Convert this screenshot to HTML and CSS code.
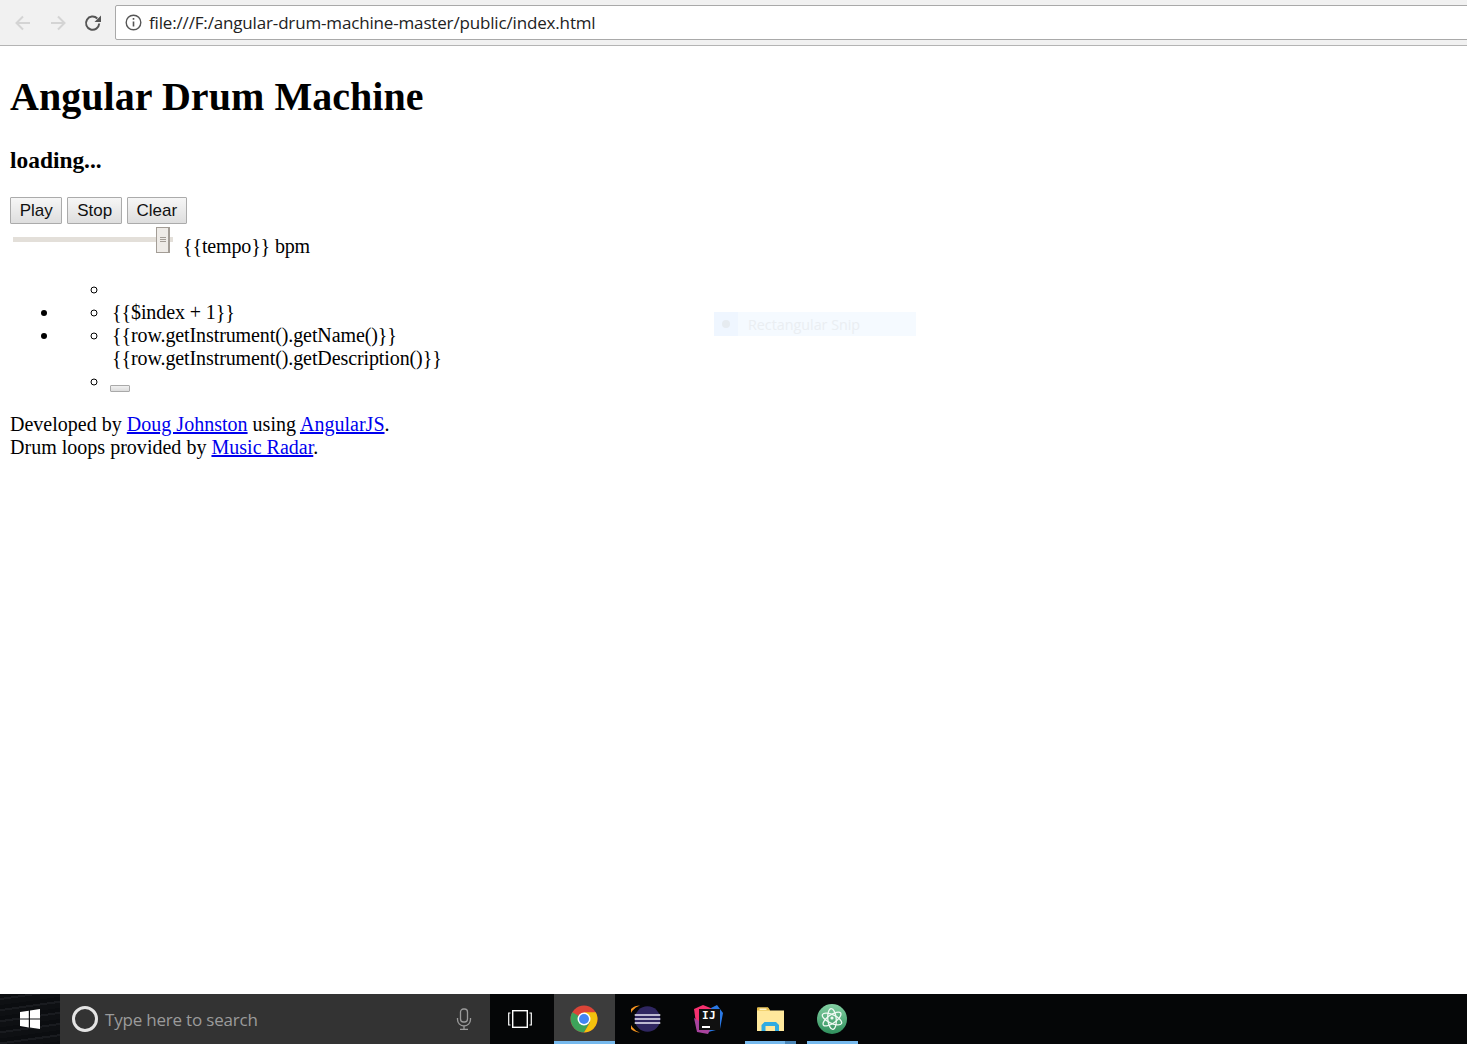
FILE: index.html
```html
<!DOCTYPE html>
<html lang="en">
<head>
<meta charset="utf-8">
<title>Angular Drum Machine</title>
<link rel="stylesheet" href="styles.css">
</head>
<body>
<header class="toolbar">
  <svg class="nav-icon" width="20" height="20" viewBox="0 0 20 20"><path d="M17 10H4M10 3.500L3.500 10l6.500 6.500" fill="none" stroke="#d4d4d4" stroke-width="2"/></svg>
  <svg class="nav-icon" width="20" height="20" viewBox="0 0 20 20"><path d="M3 10h13M10 3.500l6.500 6.500-6.500 6.500" fill="none" stroke="#d4d4d4" stroke-width="2"/></svg>
  <svg class="nav-icon" width="20" height="20" viewBox="0 0 20 20"><path d="M16.200 10.500a6.600 6.600 0 1 1-1.900-5" fill="none" stroke="#555" stroke-width="2"/><path d="M18 2.500v6.500h-6.500z" fill="#555"/></svg>
  <div class="address">
    <svg width="17" height="17" viewBox="0 0 17 17"><circle cx="8.500" cy="8.500" r="7.300" fill="none" stroke="#555" stroke-width="1.400"/><path d="M8.500 7.500v5M8.500 4v1.800" stroke="#555" stroke-width="1.600"/></svg>
    <span class="url">file:///F:/angular-drum-machine-master/public/index.html</span>
  </div>
</header>

<main class="page">
  <h1>Angular Drum Machine</h1>
  <h3>loading...</h3>
  <div class="controls">
    <button class="btn">Play</button>
    <button class="btn">Stop</button>
    <button class="btn">Clear</button>
  </div>
  <div class="tempo">
    <div class="slider"><div class="thumb"><i></i><i></i><i></i></div></div>
    <span>{{tempo}} bpm</span>
  </div>
  <ul class="outer">
    <ul class="inner"><li></li></ul>
    <li><ul class="inner"><li>{{$index + 1}}</li></ul></li>
    <li>
      <ul class="inner">
        <li>{{row.getInstrument().getName()}}<br>{{row.getInstrument().getDescription()}}</li>
        <li><button class="pad"></button></li>
      </ul>
    </li>
  </ul>
  <footer class="credits">
    Developed by <a href="#">Doug Johnston</a> using <a href="#">AngularJS</a>.<br>
    Drum loops provided by <a href="#">Music Radar</a>.
  </footer>
  <div class="snip"><span class="snip-icon"><b></b></span><span class="snip-label">Rectangular Snip</span></div>
</main>

<div class="taskbar">
  <div class="start">
    <svg width="20" height="20" viewBox="0 0 20 20"><path fill="#fff" d="M0 3l8.800-1.300v7.800H0zM10 1.500L20 0v9.500H10zM0 10.600h8.800v7.800L0 17.100zM10 10.600h10V20l-10-1.500z"/></svg>
  </div>
  <div class="search">
    <svg width="28" height="28" viewBox="0 0 28 28"><circle cx="14" cy="14" r="11.500" fill="none" stroke="#e4e4e4" stroke-width="3"/></svg>
    <span class="search-text">Type here to search</span>
    <svg class="mic" width="16" height="22" viewBox="0 0 16 22"><rect x="4.500" y="1" width="7" height="13" rx="3" fill="none" stroke="#9a9a9a" stroke-width="1.300"/><path d="M1.500 10v1.500a6.500 6.500 0 0 0 13 0V10M8 18v3M4 21.300h8" fill="none" stroke="#9a9a9a" stroke-width="1.300"/></svg>
  </div>
  <div class="task-slot view">
    <svg width="24" height="18" viewBox="0 0 24 18"><rect x="4.700" y=".7" width="14.600" height="16.600" fill="none" stroke="#fff" stroke-width="1.400"/><path d="M2.500 3H.7v12h1.800M21.500 3h1.800v12h-1.800" fill="none" stroke="#fff" stroke-width="1.200"/></svg>
  </div>
  <div class="task-slot chrome">
    <svg width="28" height="28" viewBox="0 0 28 28"><circle cx="14" cy="14" r="13.500" fill="#db4437"/><path d="M14 14L2.300 7.300A13.500 13.500 0 0 0 14 27.500l6.700-11.700z" fill="#3da35a"/><path d="M14 7.300h11.700A13.500 13.500 0 0 1 14 27.500l6-10z" fill="#f4c20d"/><circle cx="14" cy="14" r="6.500" fill="#fff"/><circle cx="14" cy="14" r="5" fill="#4285f4"/></svg>
  </div>
  <div class="task-slot eclipse">
    <svg width="30" height="28" viewBox="0 0 30 28"><path d="M9 .5a13.500 13.500 0 0 0 0 27a14 14 0 0 1 0-27z" fill="#f7941e"/><circle cx="16.500" cy="14" r="12.800" fill="#2f2660"/><path d="M3.700 10h25.600M3.700 14h25.600M3.700 18h25.600" stroke="#ece9f5" stroke-width="1.700"/></svg>
  </div>
  <div class="task-slot idea">
    <div class="idea-art">
      <svg width="30" height="31" viewBox="0 0 30 31"><path d="M1 5l9-4 10 4-16 21z" fill="#f5316f"/><path d="M18 4l6-3 6 8-3 16-12 3z" fill="#2a78e4"/><path d="M1 14l3 14 11 2 3-6z" fill="#a8439d"/><rect x="6" y="5" width="21" height="21" fill="#111"/></svg>
      <span class="idea-text">IJ</span><span class="idea-bar"></span>
    </div>
  </div>
  <div class="task-slot folder">
    <svg width="27" height="24" viewBox="0 0 27 24"><path d="M0 1.500a1 1 0 0 1 1-1h10l2 3h14V24H0z" fill="#ffe89c"/><path d="M0 1.500a1 1 0 0 1 1-1h10l2 3H0z" fill="#e6bb45"/><rect x="2.500" y="1.500" width="7" height="1.500" fill="#fff6cf"/><path d="M4.500 24v-6l3-3h11.500l3 3v6h-4v-5h-9.500v5z" fill="#2fabe2"/></svg>
  </div>
  <div class="task-slot atom">
    <svg width="30" height="30" viewBox="0 0 30 30"><defs><linearGradient id="atom-fill" x1="0" y1="0" x2="0" y2="1"><stop offset="0" stop-color="#83cfa2"/><stop offset="1" stop-color="#2f8f5c"/></linearGradient></defs><circle cx="15" cy="15" r="15" fill="url(#atom-fill)"/><g fill="none" stroke="#f0f9f3" stroke-width="1.300"><ellipse cx="15" cy="15" rx="10.500" ry="4.200" transform="rotate(25 15 15)"/><ellipse cx="15" cy="15" rx="10.500" ry="4.200" transform="rotate(-35 15 15)"/><ellipse cx="15" cy="15" rx="10.500" ry="4.200" transform="rotate(85 15 15)"/></g><circle cx="15" cy="14" r="1.600" fill="#f0f9f3"/></svg>
  </div>
</div>
</body>
</html>
```

FILE: styles.css
```css
html, body { margin: 0; height: 100%; }
body {
  display: flex;
  flex-direction: column;
  height: 1044px;
  overflow: hidden;
  background: #fff;
  color: #000;
  font-family: "Liberation Serif", serif;
  font-size: 20px;
  line-height: 23px;
}

.toolbar {
  display: flex;
  align-items: center;
  gap: 15px;
  height: 45px;
  padding: 0 0 0 13px;
  background: #f1f1f1;
  border-bottom: 1px solid #b4b4b4;
  flex: none;
}
.address {
  flex: 1;
  display: flex;
  align-items: center;
  gap: 7px;
  height: 33px;
  margin: -1px -4px 0 -3px;
  padding-left: 9px;
  background: #fff;
  border: 1px solid #a9a9a9;
  border-radius: 2px;
}
.url {
  font-family: "Open Sans", sans-serif;
  font-size: 17px;
  letter-spacing: -0.16px;
  color: #222;
}

.page { flex: 1; position: relative; padding: 0 10px; min-height: 0; }
h1 { font-size: 40px; line-height: 46px; margin: 28px 0 0; letter-spacing: 0.05px; }
h3 { font-size: 23.400px; line-height: 27px; margin: 27px 0 0; }

.controls { display: flex; gap: 5px; margin-top: 23px; }
.btn {
  height: 27px;
  padding: 0 8.700px;
  font-family: "Liberation Sans", sans-serif;
  font-size: 17px;
  color: #111;
  background: linear-gradient(#f6f6f6, #dedede);
  border: 1px solid #ababab;
  border-radius: 1px;
}

.tempo { display: flex; align-items: flex-start; gap: 10px; letter-spacing: -0.15px; }
.tempo span { margin-top: 11px; }
.slider {
  display: flex;
  justify-content: flex-end;
  align-items: center;
  width: 160px;
  height: 5px;
  margin: 13px 0 0 3px;
  background: #e3dfd9;
}
.thumb {
  display: flex;
  flex-direction: column;
  justify-content: center;
  align-items: center;
  gap: 1px;
  flex: none;
  box-sizing: border-box;
  width: 14px;
  height: 26px;
  margin-right: 3px;
  background: #eeebe7;
  border: 1px solid #a39d96;
  border-right-width: 2px;
}
.thumb i { display: block; width: 6px; height: 1px; background: #a39d96; }

.outer { margin: 20px 0; padding-left: 50px; }
.inner { padding-left: 50px; margin: 0; list-style: circle; letter-spacing: -0.1px; }
.inner li { padding-left: 2px; }
.pad {
  display: inline-block;
  vertical-align: top;
  width: 20px;
  height: 7px;
  margin: 15px 0 0 -2px;
  padding: 0;
  background: linear-gradient(#f0f0f0, #dcdcdc);
  border: 1px solid #a9a9a9;
  border-radius: 1px;
}
.credits { letter-spacing: 0.015px; }
.credits a { color: #00e; }

.snip {
  position: absolute;
  left: 714px;
  top: 266px;
  display: flex;
  width: 202px;
  height: 24px;
  background: #f5faff;
  font-family: "Open Sans", sans-serif;
  font-size: 14.300px;
  color: #eaeef2;
}
.snip-icon {
  display: flex;
  align-items: center;
  justify-content: center;
  width: 24px;
  background: #eff6ff;
}
.snip-icon b { width: 8px; height: 8px; border-radius: 50%; background: #e6ebf0; }
.snip-label { margin-left: 10px; line-height: 25px; }

.taskbar {
  flex: none;
  display: flex;
  height: 50px;
  background: #050607;
}
.start {
  width: 60px;
  display: flex;
  align-items: center;
  justify-content: center;
  background: repeating-linear-gradient(172deg, #0b0d10 0 4px, #191b1f 4px 6px, #0e1013 6px 11px);
}
.search {
  width: 430px;
  display: flex;
  align-items: center;
  padding-left: 11px;
  box-sizing: border-box;
  background: #333;
}
.search-text {
  margin-left: 6px;
  flex: 1;
  font-family: "Open Sans", sans-serif;
  font-size: 17px;
  letter-spacing: -0.2px;
  color: #9b9b9b;
}
.mic { margin-right: 18px; }
.task-slot {
  display: flex;
  align-items: center;
  justify-content: center;
  box-sizing: border-box;
  height: 50px;
}
.view { width: 64px; padding-right: 4px; }
.chrome { width: 61px; padding: 3px 2px 0 0; background: #3c3c3c; border-bottom: 3px solid #76b9ed; }
.eclipse { width: 62px; }
.idea { width: 62px; }
.folder {
  width: 51px;
  margin-left: 6px;
  padding: 2px 1px 3px 0;
  background: linear-gradient(to right, #76b9ed 40px, #4a86b8 40px) bottom / 100% 3px no-repeat;
}
.atom { width: 51px; margin-left: 11px; padding: 3px 2px 0 0; border-bottom: 3px solid #76b9ed; }
.idea-art { position: relative; width: 30px; height: 31px; }
.idea-text {
  position: absolute;
  left: 9px;
  top: 5px;
  font-family: "DejaVu Sans Mono", monospace;
  font-size: 11px;
  font-weight: bold;
  line-height: 13px;
  letter-spacing: 0.5px;
  color: #fff;
}
.idea-bar { position: absolute; left: 9px; top: 22px; width: 8px; height: 2px; background: #fff; }
```
